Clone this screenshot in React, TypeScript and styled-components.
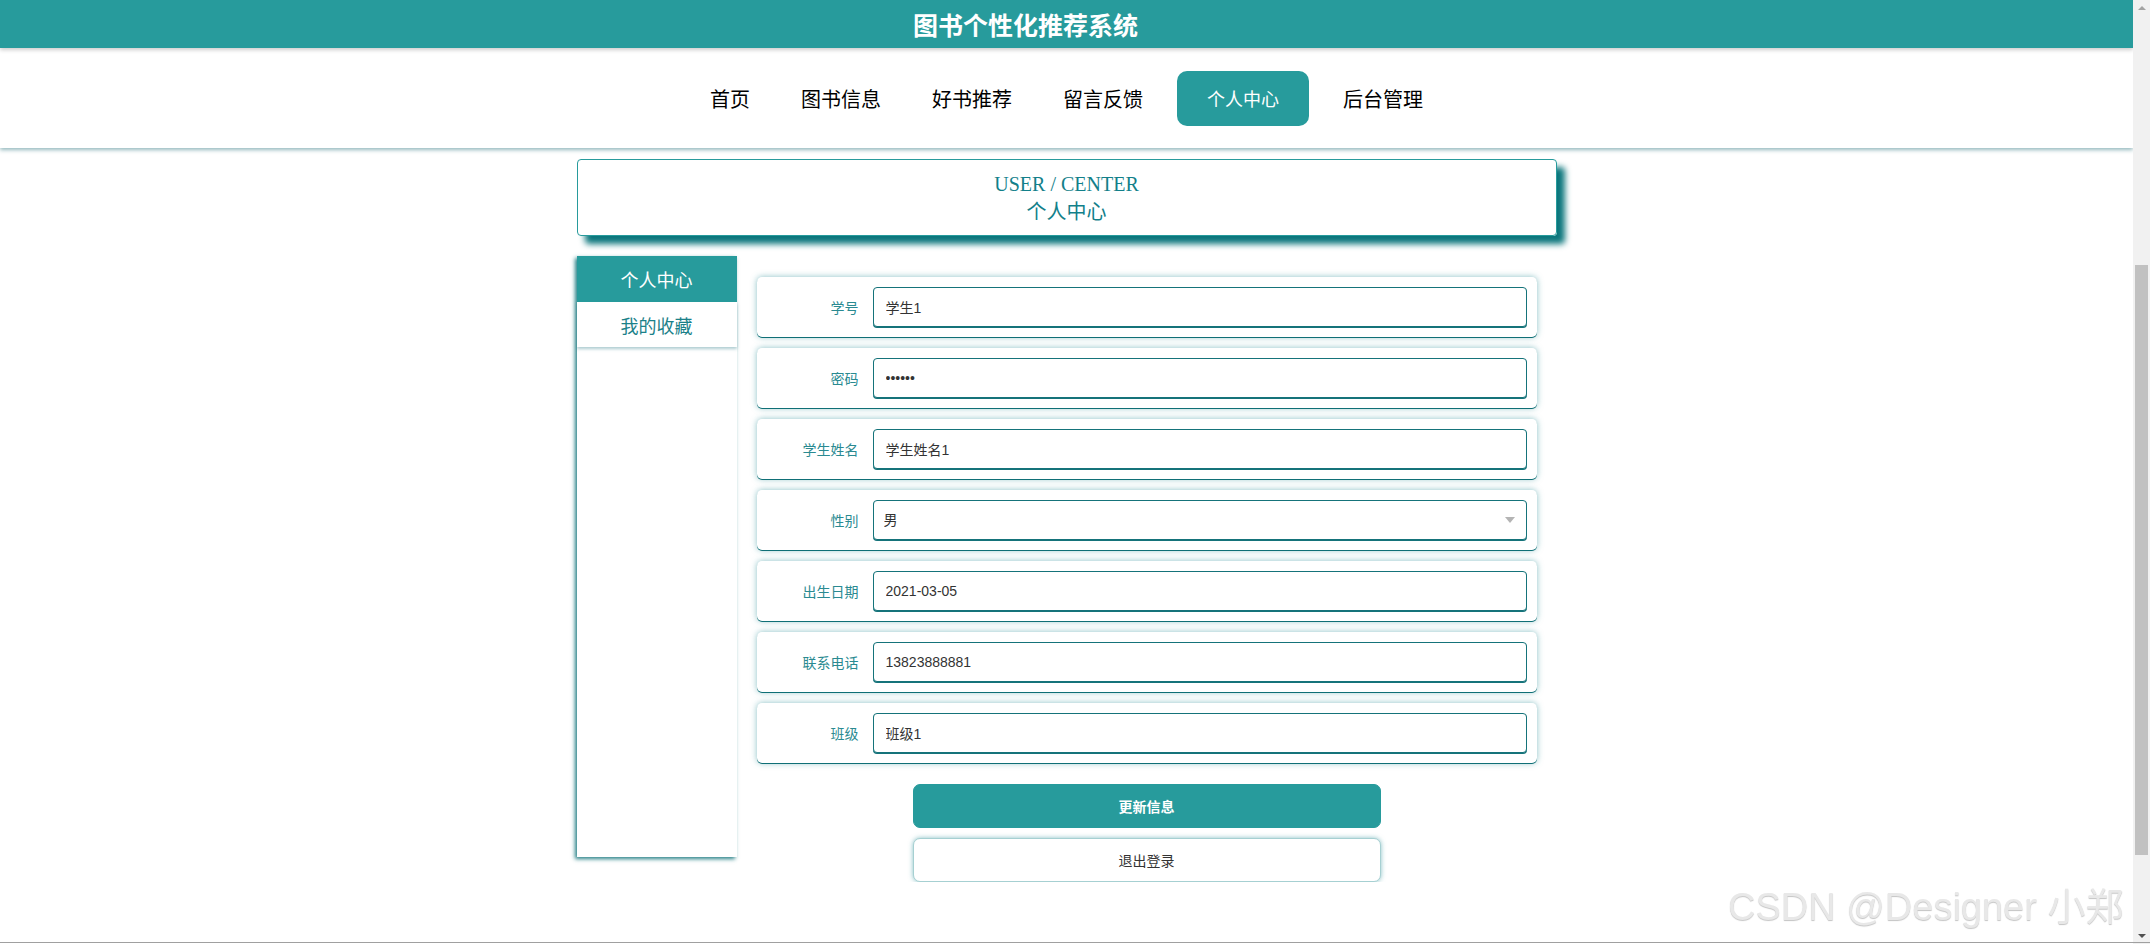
import React from 'react'
import styled, { createGlobalStyle } from 'styled-components'

const teal = '#279b9c'
const darkTeal = '#15737a'

const GlobalStyle = createGlobalStyle`
  body {
    margin: 0;
    padding-right: 17px;
    background: #ffffff;
    overflow-x: hidden;
    font-family: "Liberation Sans", "Noto Sans CJK SC", sans-serif;
  }
`

const Header = styled.header`
  position: relative;
  z-index: 2;
  height: 48px;
  display: flex;
  align-items: center;
  justify-content: center;
  padding-right: 82px;
  background: ${teal};
  color: #ffffff;
  font-size: 25px;
  font-weight: 700;
  box-shadow: 0 2px 4px rgba(0, 0, 0, 0.2);
`

const Nav = styled.nav`
  position: relative;
  z-index: 1;
  height: 100px;
  display: flex;
  align-items: center;
  justify-content: center;
  gap: 17px;
  background: #ffffff;
  box-shadow: 0 2px 4px rgba(20, 100, 110, 0.45);
`

const NavItem = styled.a<{ $active?: boolean }>`
  height: 55px;
  line-height: 55px;
  padding: 0 ${({ $active }) => ($active ? '30px' : '17px')};
  border-radius: 10px;
  background: ${({ $active }) => ($active ? teal : 'transparent')};
  color: ${({ $active }) => ($active ? '#ffffff' : '#000000')};
  font-size: ${({ $active }) => ($active ? '18px' : '20px')};
  font-family: "Noto Sans CJK SC", sans-serif;
  cursor: pointer;
`

const Container = styled.main`
  width: 980px;
  margin: 11px auto 0;
`

const TitleBox = styled.div`
  box-sizing: border-box;
  height: 77px;
  padding: 10px 0 9px;
  border: 1px solid ${teal};
  border-radius: 4px;
  box-shadow: 8px 8px 6px #0b767c;
  text-align: center;
  line-height: 28px;
  color: #12808a;
  font-size: 20px;
  font-family: "Liberation Serif", "Noto Sans CJK SC", serif;
`

const Content = styled.div`
  display: flex;
  align-items: flex-start;
  margin-top: 20px;
`

const Sidebar = styled.aside`
  width: 160px;
  height: 601px;
  flex-shrink: 0;
  box-shadow: -2px 2px 4px rgba(15, 115, 122, 0.9);
`

const SideItem = styled.div<{ $active?: boolean }>`
  height: ${({ $active }) => ($active ? '46px' : '45px')};
  display: flex;
  align-items: center;
  justify-content: center;
  font-size: 18px;
  font-family: "Noto Sans CJK SC", sans-serif;
  background: ${({ $active }) => ($active ? teal : '#ffffff')};
  color: ${({ $active }) => ($active ? '#ffffff' : '#1b8189')};
  box-shadow: ${({ $active }) => ($active ? 'none' : '0 2px 3px rgba(20, 110, 120, 0.35)')};
  cursor: pointer;
`

const Main = styled.section`
  width: 780px;
  margin-left: 20px;
  padding-top: 21px;
`

const FieldCard = styled.div`
  box-sizing: border-box;
  height: 60px;
  margin-bottom: 11px;
  padding: 10px;
  display: flex;
  align-items: center;
  gap: 14px;
  border-radius: 5px;
  background: #ffffff;
  box-shadow: 0 1px 0 #0f6f76, 0 0 6px rgba(40, 140, 150, 0.55);
`

const Label = styled.label`
  width: 92px;
  flex-shrink: 0;
  text-align: right;
  font-size: 14px;
  color: #2a8a91;
`

const Input = styled.input`
  flex: 1;
  box-sizing: border-box;
  height: 40px;
  padding: 0 12px;
  border: 1px solid ${darkTeal};
  border-radius: 4px;
  box-shadow: 0 1px 0 ${darkTeal};
  outline: none;
  font-size: 14px;
  font-family: "Liberation Sans", "Noto Sans CJK SC", sans-serif;
  color: #333333;
  background: #ffffff;
`

const SelectWrap = styled.div`
  position: relative;
  flex: 1;
  display: flex;

  &::after {
    content: '';
    position: absolute;
    right: 12px;
    top: 17px;
    border-left: 5px solid transparent;
    border-right: 5px solid transparent;
    border-top: 6px solid #b4b4b4;
    pointer-events: none;
  }
`

const Select = styled(Input).attrs({ as: 'select' })`
  appearance: none;
  -webkit-appearance: none;
  padding: 0 10px;
`

const Actions = styled.div`
  display: flex;
  flex-direction: column;
  align-items: center;
  gap: 10px;
  margin-top: 21px;
`

const Button = styled.button<{ $primary?: boolean }>`
  width: 468px;
  height: 44px;
  border-radius: 7px;
  font-size: 14px;
  font-family: "Liberation Sans", "Noto Sans CJK SC", sans-serif;
  font-weight: ${({ $primary }) => ($primary ? 700 : 400)};
  cursor: pointer;
  background: ${({ $primary }) => ($primary ? teal : '#ffffff')};
  color: ${({ $primary }) => ($primary ? '#ffffff' : '#333333')};
  border: 1px solid ${({ $primary }) => ($primary ? teal : '#a6d0d2')};
  box-shadow: ${({ $primary }) => ($primary ? 'none' : '0 0 5px rgba(39, 140, 150, 0.55)')};
`

const Watermark = styled.div`
  position: fixed;
  left: 1728px;
  top: 888px;
  z-index: 5;
  white-space: nowrap;
  line-height: 38px;
  font-size: 38px;
  font-family: "Liberation Sans", "Noto Sans CJK SC", sans-serif;
  color: #e8e8e8;
  text-shadow: 0 1px 1px #c4c4c4;
  pointer-events: none;
`

/* browser chrome seen in the screenshot: the window's scrollbar */
const ScrollTrack = styled.div`
  position: fixed;
  top: 0;
  right: 0;
  bottom: 0;
  z-index: 6;
  width: 17px;
  background: #f1f1f1;

  &::before,
  &::after {
    content: '';
    position: absolute;
    left: 5px;
    border-left: 4px solid transparent;
    border-right: 4px solid transparent;
  }
  &::before {
    top: 6px;
    border-bottom: 4px solid #a3a3a3;
  }
  &::after {
    bottom: 6px;
    border-top: 4px solid #505050;
  }
`

const ScrollThumb = styled.div`
  position: absolute;
  left: 2px;
  right: 2px;
  top: 265px;
  height: 590px;
  background: #c1c1c1;
`

const WindowEdge = styled.div`
  position: fixed;
  left: 0;
  right: 0;
  bottom: 1px;
  z-index: 7;
  height: 1px;
  background: #a0a0a0;
`

const navItems = ['首页', '图书信息', '好书推荐', '留言反馈', '个人中心', '后台管理']

const fields = [
  { label: '学号', value: '学生1' },
  { label: '密码', value: '123456', type: 'password' },
  { label: '学生姓名', value: '学生姓名1' },
  { label: '性别', value: '男', select: true },
  { label: '出生日期', value: '2021-03-05' },
  { label: '联系电话', value: '13823888881' },
  { label: '班级', value: '班级1' },
]

export default function App() {
  return (
    <>
      <GlobalStyle />
      <Header>图书个性化推荐系统</Header>
      <Nav>
        {navItems.map((item) => (
          <NavItem key={item} $active={item === '个人中心'}>
            {item}
          </NavItem>
        ))}
      </Nav>
      <Container>
        <TitleBox>
          <div>USER / CENTER</div>
          <div>个人中心</div>
        </TitleBox>
        <Content>
          <Sidebar>
            <SideItem $active>个人中心</SideItem>
            <SideItem>我的收藏</SideItem>
          </Sidebar>
          <Main>
            {fields.map((f) => (
              <FieldCard key={f.label}>
                <Label>{f.label}</Label>
                {f.select ? (
                  <SelectWrap>
                    <Select defaultValue={f.value}>
                      <option value="男">男</option>
                      <option value="女">女</option>
                    </Select>
                  </SelectWrap>
                ) : (
                  <Input type={f.type || 'text'} defaultValue={f.value} />
                )}
              </FieldCard>
            ))}
            <Actions>
              <Button $primary>更新信息</Button>
              <Button>退出登录</Button>
            </Actions>
          </Main>
        </Content>
      </Container>
      <Watermark>CSDN @Designer 小郑</Watermark>
      <ScrollTrack>
        <ScrollThumb />
      </ScrollTrack>
      <WindowEdge />
    </>
  )
}
